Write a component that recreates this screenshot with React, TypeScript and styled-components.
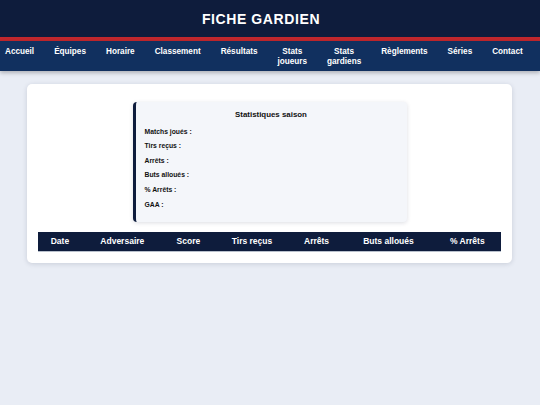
import React from "react";
import styled, { createGlobalStyle } from "styled-components";

const GlobalStyle = createGlobalStyle`
  html, body {
    margin: 0;
    padding: 0;
    background: #e9edf5;
    font-family: "Liberation Sans", Arial, sans-serif;
  }
  * { box-sizing: border-box; }
`;

const Header = styled.header`
  background: #0e1c3c;
  height: 37px;
  display: flex;
  align-items: center;
  justify-content: center;
  padding-right: 18px;
  border-bottom: 4px solid #c1272d;
  box-sizing: content-box;
`;

const Title = styled.h1`
  margin: 0;
  color: #ffffff;
  font-size: 14px;
  font-weight: 700;
  letter-spacing: 0.6px;
`;

const Nav = styled.nav`
  background: #11305f;
  display: flex;
  align-items: flex-start;
  gap: 10px;
  height: 30px;
  padding-right: 17px;
  box-shadow: 0 2px 4px rgba(0, 0, 0, 0.25);
`;

const NavLink = styled.a`
  color: #ffffff;
  text-decoration: none;
  font-size: 8.2px;
  font-weight: 700;
  line-height: 10px;
  padding: 5px;
  margin-top: 1px;
  text-align: center;
  flex: 0 1 auto;
`;

const Main = styled.main`
  padding: 13px 28px 13px 27px;
`;

const Card = styled.section`
  background: #ffffff;
  border-radius: 5px;
  box-shadow: 0 1px 5px rgba(20, 30, 60, 0.15);
  padding: 18px 11px 11px;
`;

const StatsBox = styled.div`
  width: 274px;
  margin: 0 auto 10px;
  background: #f4f6fa;
  border-left: 3px solid #0e1c3c;
  border-radius: 4px;
  box-shadow: 0 1px 4px rgba(20, 30, 60, 0.15);
  padding: 8px 9px 13px;
  display: flex;
  flex-direction: column;
  gap: 5.6px;
`;

const StatsTitle = styled.h3`
  margin: 0 0 1px;
  text-align: center;
  font-size: 7.9px;
  line-height: 10px;
  font-weight: 700;
  color: #111111;
`;

const StatLine = styled.p`
  margin: 0;
  font-size: 6.8px;
  line-height: 9px;
  font-weight: 700;
  color: #111111;
`;

const Table = styled.table`
  width: 100%;
  border-collapse: collapse;
`;

const Th = styled.th`
  background: #0e1c3c;
  color: #ffffff;
  font-size: 8.5px;
  font-weight: 700;
  padding: 4.5px 6px;
  text-align: center;
  border-bottom: 1px solid #b8c0cc;
  white-space: nowrap;
`;

const navItems = [
  "Accueil",
  "Équipes",
  "Horaire",
  "Classement",
  "Résultats",
  "Stats joueurs",
  "Stats gardiens",
  "Règlements",
  "Séries",
  "Contact",
];

const stats = ["Matchs joués :", "Tirs reçus :", "Arrêts :", "Buts alloués :", "% Arrêts :", "GAA :"];

const columns = ["Date", "Adversaire", "Score", "Tirs reçus", "Arrêts", "Buts alloués", "% Arrêts"];

export default function App() {
  return (
    <>
      <GlobalStyle />
      <Header>
        <Title>FICHE GARDIEN</Title>
      </Header>
      <Nav>
        {navItems.map((item) => (
          <NavLink key={item} href="#">
            {item}
          </NavLink>
        ))}
      </Nav>
      <Main>
        <Card>
          <StatsBox>
            <StatsTitle>Statistiques saison</StatsTitle>
            {stats.map((s) => (
              <StatLine key={s}>{s}</StatLine>
            ))}
          </StatsBox>
          <Table>
            <thead>
              <tr>
                {columns.map((c) => (
                  <Th key={c}>{c}</Th>
                ))}
              </tr>
            </thead>
          </Table>
        </Card>
      </Main>
    </>
  );
}
